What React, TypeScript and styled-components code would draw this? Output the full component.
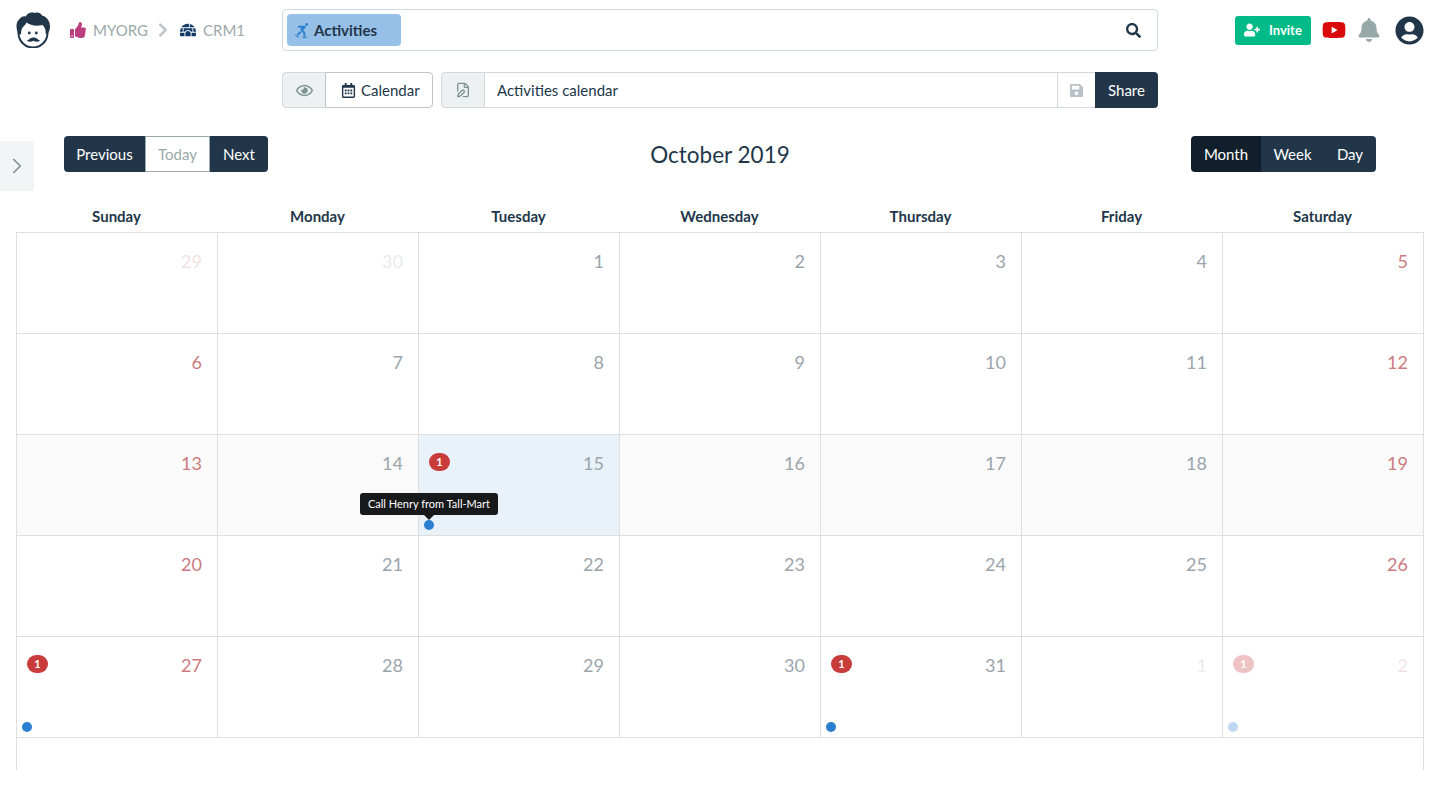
import React from 'react';
import styled, { createGlobalStyle } from 'styled-components';
import {
  FaBell,
  FaChevronRight,
  FaIgloo,
  FaRegCalendarAlt,
  FaRegEye,
  FaSave,
  FaSearch,
  FaSkating,
  FaThumbsUp,
  FaUserCircle,
  FaUserPlus,
  FaYoutube,
} from 'react-icons/fa';
import { ChevronRight, FilePen } from 'lucide-react';

const GlobalStyle = createGlobalStyle`
  html, body {
    margin: 0;
    padding: 0;
    background: #fff;
    font-family: 'Lato', 'Liberation Sans', sans-serif;
    color: #22364a;
  }
  * { box-sizing: border-box; }
`;

const Page = styled.div`
  position: relative;
  width: 1440px;
  height: 786px;
  overflow: hidden;
  padding-top: 9px;
`;

const TopBar = styled.header`
  display: flex;
  align-items: center;
  height: 42px;
`;

const Logo = styled.svg`
  width: 34px;
  height: 36px;
  margin-left: 16px;
  flex: none;
`;

const Breadcrumb = styled.nav`
  display: flex;
  align-items: center;
  width: 232px;
  padding-left: 20px;
  font-size: 15px;
  color: #9aa9aa;
`;

const CrumbIcon = styled.span<{ $color: string; $gap: number }>`
  display: inline-flex;
  color: ${(p) => p.$color};
  font-size: 16px;
  margin-right: ${(p) => p.$gap}px;
`;

const CrumbSep = styled.span`
  display: inline-flex;
  color: #bcc6c8;
  font-size: 16px;
  margin: 0 9px 0 7px;
`;

const SearchBox = styled.div`
  display: flex;
  align-items: center;
  justify-content: space-between;
  width: 876px;
  height: 42px;
  padding: 0 16px 0 4px;
  border: 1px solid #d3d9de;
  border-radius: 4px;
`;

const ActiveTag = styled.div`
  display: flex;
  align-items: center;
  gap: 5px;
  width: 114px;
  height: 32px;
  padding-left: 7px;
  background: #96c0e8;
  border-radius: 4px;
  font-size: 15px;
  font-weight: 700;
  color: #22364a;
  svg { color: #2a7fd0; font-size: 15px; }
`;

const SearchIcon = styled(FaSearch)`
  font-size: 15px;
  color: #22364a;
`;

const TopActions = styled.div`
  display: flex;
  align-items: center;
  margin-left: 77px;
`;

const InviteButton = styled.button`
  display: flex;
  align-items: center;
  gap: 9px;
  width: 76px;
  height: 29px;
  padding: 0 0 0 9px;
  border: 0;
  border-radius: 3px;
  background: #00bb87;
  color: #fff;
  font: 700 13px 'Lato', sans-serif;
  white-space: nowrap;
  svg { font-size: 16px; flex: none; }
`;

const YoutubeIcon = styled(FaYoutube)`
  font-size: 24px;
  color: #d90a0a;
  margin-left: 11px;
`;

const BellIcon = styled(FaBell)`
  font-size: 24px;
  color: #97a8a9;
  margin-left: 11px;
`;

const UserIcon = styled(FaUserCircle)`
  font-size: 29px;
  color: #22364a;
  margin-left: 14px;
`;

const ViewBar = styled.div`
  display: flex;
  height: 36px;
  margin: 21px 0 0 282px;
  width: 876px;
`;

const AddonIcon = styled.div<{ $width: number }>`
  display: flex;
  align-items: center;
  justify-content: center;
  width: ${(p) => p.$width}px;
  flex: none;
  background: #edf1f2;
  border: 1px solid #d3d9de;
  border-radius: 4px 0 0 4px;
  color: #7f9292;
  font-size: 17px;
`;

const ViewSelect = styled.div`
  display: flex;
  align-items: center;
  gap: 5px;
  width: 108px;
  margin-left: -1px;
  padding-left: 15px;
  border: 1px solid #bcc6cc;
  border-radius: 0 4px 4px 0;
  font-size: 15px;
  svg { font-size: 15px; }
`;

const NameGroup = styled.div`
  display: flex;
  margin-left: 8px;
  flex: 1;
`;

const NameField = styled.div`
  display: flex;
  align-items: center;
  flex: 1;
  padding-left: 12px;
  margin-left: -1px;
  border: 1px solid #d3d9de;
  font-size: 15px;
`;

const SaveSlot = styled.div`
  display: flex;
  align-items: center;
  justify-content: center;
  width: 38px;
  margin-left: -1px;
  border: 1px solid #d3d9de;
  border-right: 0;
  color: #b7c1c6;
  font-size: 15px;
`;

const ShareButton = styled.button`
  width: 63px;
  border: 0;
  border-radius: 0 4px 4px 0;
  background: #22364a;
  color: #fff;
  font: 400 15px 'Lato', sans-serif;
`;

const SideToggle = styled.div`
  position: absolute;
  left: 0;
  top: 141px;
  width: 34px;
  height: 50px;
  display: flex;
  align-items: center;
  justify-content: center;
  background: #f1f5f6;
  border-radius: 0 3px 3px 0;
  color: #808e90;
`;

const CalendarWrap = styled.section`
  margin-top: 28px;
  padding: 0 16px;
`;

const Toolbar = styled.div`
  display: grid;
  grid-template-columns: 1fr auto 1fr;
  align-items: center;
  height: 36px;
  padding: 0 48px;
`;

const ButtonGroup = styled.div<{ $end?: boolean }>`
  display: flex;
  height: 36px;
  justify-self: ${(p) => (p.$end ? 'end' : 'start')};
  border-radius: 4px;
  overflow: hidden;
`;

const NavButton = styled.button<{ $width: number; $disabled?: boolean; $active?: boolean }>`
  width: ${(p) => p.$width}px;
  padding: 0;
  border: ${(p) => (p.$disabled ? '1px solid #9aa9aa' : '0')};
  background: ${(p) => (p.$disabled ? '#fff' : p.$active ? '#111f2c' : '#22364a')};
  color: ${(p) => (p.$disabled ? '#9aa9aa' : '#fff')};
  font: 400 15px 'Lato', sans-serif;
`;

const MonthTitle = styled.h2`
  margin: 1px 0 0;
  font-size: 22.5px;
  font-weight: 400;
  color: #22364a;
`;

const WeekHead = styled.div`
  display: grid;
  grid-template-columns: repeat(7, 201px);
  margin-top: 28px;
  height: 32px;
`;

const DayName = styled.div`
  text-align: center;
  font-size: 15px;
  font-weight: 700;
  line-height: 32px;
  color: #22364a;
`;

const Grid = styled.div`
  display: grid;
  grid-template-columns: repeat(6, 201px) 200px;
  grid-auto-rows: 101px;
  width: 1408px;
  height: 538px;
  border-left: 1px solid #dfdfdf;
  border-right: 1px solid #dfdfdf;
  border-top: 1px solid #dfdfdf;
`;

const Cell = styled.div<{ $row: 'plain' | 'week' | 'today' }>`
  position: relative;
  border-right: 1px solid #dfdfdf;
  border-bottom: 1px solid #dfdfdf;
  background: ${(p) =>
    p.$row === 'today' ? '#e9f2f9' : p.$row === 'week' ? '#fafafa' : '#fff'};
  &:nth-child(7n) { border-right: 0; }
`;

const DayNumber = styled.div<{ $weekend?: boolean; $faded?: boolean }>`
  position: absolute;
  top: 17px;
  right: 15px;
  font-size: 18px;
  line-height: 22px;
  color: ${(p) => (p.$weekend ? '#cc7b7f' : '#9aa5ac')};
  opacity: ${(p) => (p.$faded ? 0.22 : 1)};
`;

const CountBadge = styled.span<{ $faded?: boolean }>`
  position: absolute;
  top: 18px;
  left: 10px;
  width: 21px;
  height: 18px;
  border-radius: 9px;
  background: #c93c3c;
  color: #fff;
  font-size: 11px;
  font-weight: 700;
  line-height: 18px;
  text-align: center;
  opacity: ${(p) => (p.$faded ? 0.3 : 1)};
`;

const EventDot = styled.span<{ $faded?: boolean }>`
  position: absolute;
  left: 5px;
  bottom: 5px;
  width: 10px;
  height: 10px;
  border-radius: 50%;
  background: #2a7fd0;
  opacity: ${(p) => (p.$faded ? 0.3 : 1)};
`;

const Tooltip = styled.div`
  position: absolute;
  z-index: 2;
  left: -59px;
  top: 58px;
  width: 138px;
  height: 22px;
  border-radius: 3px;
  background: #17191b;
  color: #fff;
  font-size: 11px;
  line-height: 22px;
  text-align: center;
  white-space: nowrap;
  &::after {
    content: '';
    position: absolute;
    left: 64px;
    bottom: -5px;
    border-left: 5px solid transparent;
    border-right: 5px solid transparent;
    border-top: 5px solid #17191b;
  }
`;

type Day = {
  n: number;
  faded?: boolean;
  event?: boolean;
  tip?: boolean;
};

const days: Day[] = [
  { n: 29, faded: true }, { n: 30, faded: true }, { n: 1 }, { n: 2 }, { n: 3 }, { n: 4 }, { n: 5 },
  { n: 6 }, { n: 7 }, { n: 8 }, { n: 9 }, { n: 10 }, { n: 11 }, { n: 12 },
  { n: 13 }, { n: 14 }, { n: 15, event: true, tip: true }, { n: 16 }, { n: 17 }, { n: 18 }, { n: 19 },
  { n: 20 }, { n: 21 }, { n: 22 }, { n: 23 }, { n: 24 }, { n: 25 }, { n: 26 },
  { n: 27, event: true }, { n: 28 }, { n: 29 }, { n: 30 }, { n: 31, event: true }, { n: 1, faded: true }, { n: 2, faded: true, event: true },
];

const weekNames = ['Sunday', 'Monday', 'Tuesday', 'Wednesday', 'Thursday', 'Friday', 'Saturday'];

const App = () => {
  return (
    <Page>
      <GlobalStyle />
      <TopBar>
        <Logo viewBox="0 0 34 36">
          <circle cx="17" cy="21" r="14.500" fill="#fff" stroke="#22364a" strokeWidth="2" />
          <path
            d="M2.500 22C0 17-.5 11 3 7.500 5 4.500 8 3.500 10 4.500 10.500 1.500 15-.5 19 1c2.500-1 6 0 7 2.500 4.500 1 8 5.500 8 11 0 3-1 6-3 8l-1.500-1c.5-3-.5-6-3-8.500-6 1.500-12.500.5-16-2.500-1 2.500-3.500 4-4.500 6-.8 2-.9 4-1 6z"
            fill="#22364a"
          />
          <circle cx="13.300" cy="21" r="1.400" fill="#22364a" />
          <circle cx="20.300" cy="21" r="1.400" fill="#22364a" />
          <path d="M10.500 28.500c2.500 0 3.500-3.500 7-3 3.500-.5 4.500 3 7 3-2 1.500-5 1.500-7 .3-2 1.200-5 1.200-7-.3z" fill="#22364a" />
        </Logo>
        <Breadcrumb>
          <CrumbIcon $color="#bb3f7f" $gap={7}>
            <FaThumbsUp />
          </CrumbIcon>
          MYORG
          <CrumbSep>
            <FaChevronRight />
          </CrumbSep>
          <CrumbIcon $color="#123a66" $gap={7}>
            <FaIgloo />
          </CrumbIcon>
          CRM1
        </Breadcrumb>
        <SearchBox>
          <ActiveTag>
            <FaSkating />
            Activities
          </ActiveTag>
          <SearchIcon />
        </SearchBox>
        <TopActions>
          <InviteButton>
            <FaUserPlus />
            Invite
          </InviteButton>
          <YoutubeIcon />
          <BellIcon />
          <UserIcon />
        </TopActions>
      </TopBar>

      <ViewBar>
        <AddonIcon $width={44}>
          <FaRegEye />
        </AddonIcon>
        <ViewSelect>
          <FaRegCalendarAlt />
          Calendar
        </ViewSelect>
        <NameGroup>
          <AddonIcon $width={44}>
            <FilePen size={16} strokeWidth={2} />
          </AddonIcon>
          <NameField>Activities calendar</NameField>
          <SaveSlot>
            <FaSave />
          </SaveSlot>
          <ShareButton>Share</ShareButton>
        </NameGroup>
      </ViewBar>

      <SideToggle>
        <ChevronRight size={26} strokeWidth={1.5} />
      </SideToggle>

      <CalendarWrap>
        <Toolbar>
          <ButtonGroup>
            <NavButton $width={81}>Previous</NavButton>
            <NavButton $width={65} $disabled>
              Today
            </NavButton>
            <NavButton $width={58}>Next</NavButton>
          </ButtonGroup>
          <MonthTitle>October 2019</MonthTitle>
          <ButtonGroup $end>
            <NavButton $width={70} $active>
              Month
            </NavButton>
            <NavButton $width={63}>Week</NavButton>
            <NavButton $width={52}>Day</NavButton>
          </ButtonGroup>
        </Toolbar>

        <WeekHead>
          {weekNames.map((name) => (
            <DayName key={name}>{name}</DayName>
          ))}
        </WeekHead>

        <Grid>
          {days.map((d, i) => {
            const weekend = i % 7 === 0 || i % 7 === 6;
            const row = i === 16 ? 'today' : i >= 14 && i < 21 ? 'week' : 'plain';
            return (
              <Cell key={i} $row={row}>
                {d.event && <CountBadge $faded={d.faded}>1</CountBadge>}
                <DayNumber $weekend={weekend} $faded={d.faded}>
                  {d.n}
                </DayNumber>
                {d.tip && <Tooltip>Call Henry from Tall-Mart</Tooltip>}
                {d.event && <EventDot $faded={d.faded} />}
              </Cell>
            );
          })}
        </Grid>
      </CalendarWrap>
    </Page>
  );
};

export default App;
